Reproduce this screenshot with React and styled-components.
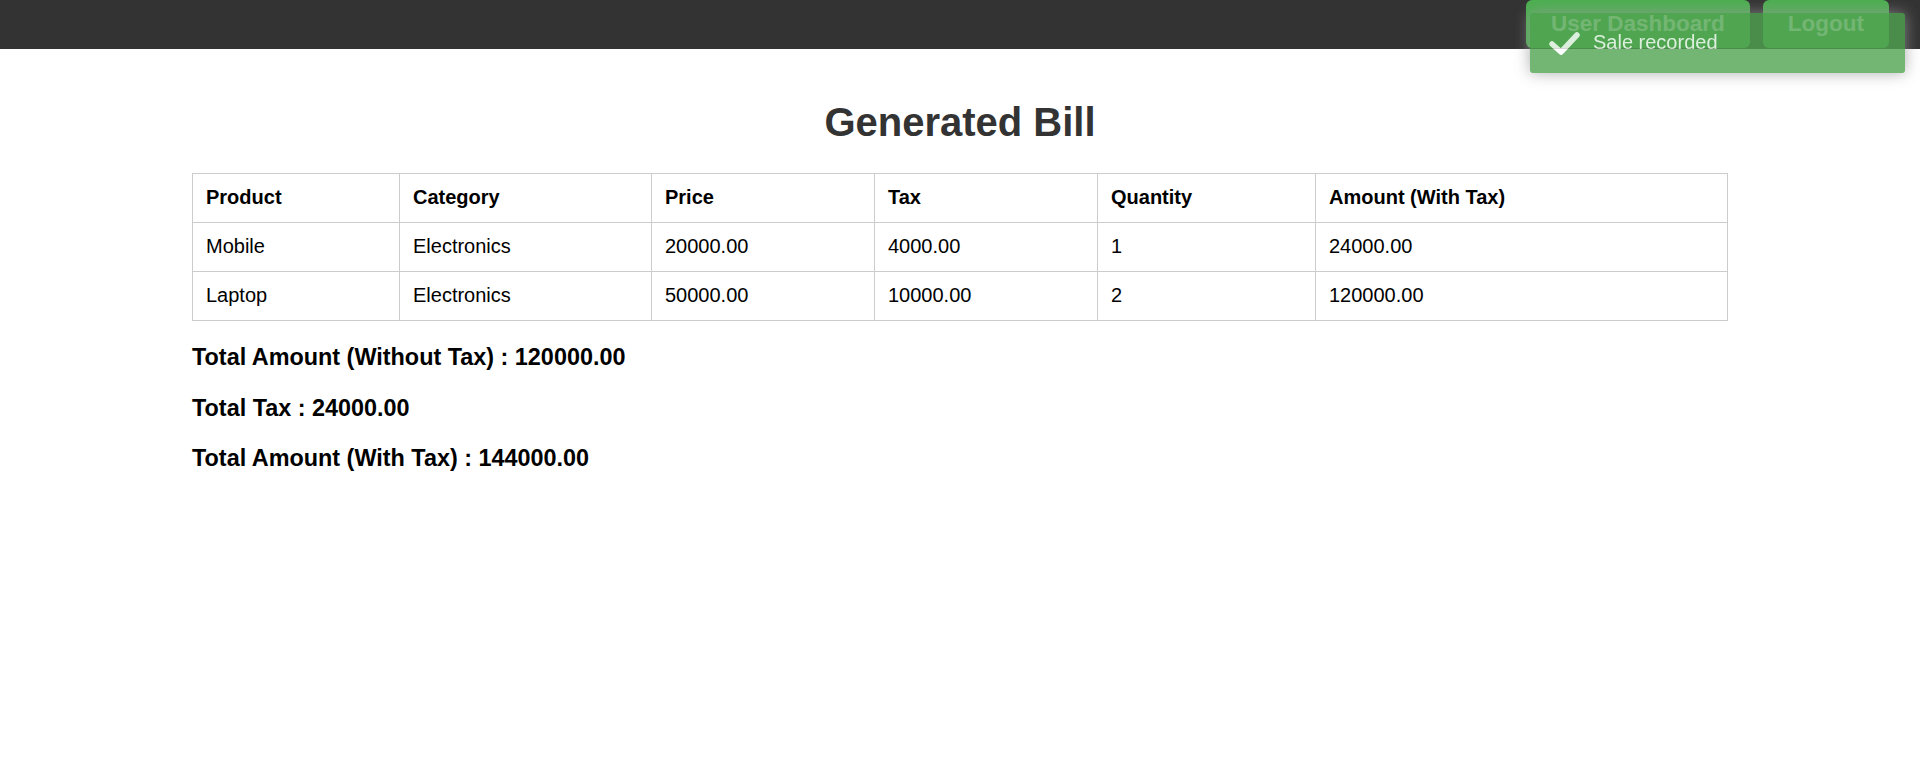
import React from "react";
import styled, { createGlobalStyle } from "styled-components";

const GlobalStyle = createGlobalStyle`
  html, body {
    margin: 0;
    padding: 0;
    background: #ffffff;
    font-family: "Liberation Sans", Arial, sans-serif;
  }
  * { box-sizing: border-box; }
`;

const Header = styled.header`
  height: 49px;
  background: #333333;
  display: flex;
  justify-content: flex-end;
  align-items: flex-start;
  gap: 13px;
  padding-right: 31px;
`;

const NavButton = styled.button`
  height: 48px;
  padding: 11px 25px;
  border: none;
  border-radius: 6px;
  background: #4caf50;
  color: #ffffff;
  font-family: "Liberation Sans", Arial, sans-serif;
  font-weight: bold;
  font-size: 22.5px;
  line-height: 26px;
  cursor: pointer;
`;

const Toast = styled.div`
  position: fixed;
  top: 13px;
  right: 15px;
  width: 375px;
  padding: 18px 15px 19px 63px;
  background: #51a351;
  color: #ffffff;
  border-radius: 3px;
  box-shadow: 0 0 15px #999999;
  opacity: 0.8;
  font-size: 20px;
  line-height: 23px;
  z-index: 1000;
`;

const ToastIcon = styled.svg`
  position: absolute;
  left: 18px;
  top: 18px;
  width: 32px;
  height: 24px;
`;

const Main = styled.main`
  width: 80%;
  margin: 0 auto;
  padding-top: 23px;
`;

const Title = styled.h1`
  margin: 27px 0 28px;
  text-align: center;
  color: #333333;
  font-size: 40px;
  line-height: 46px;
  font-weight: bold;
`;

const Table = styled.table`
  width: 100%;
  border-collapse: collapse;
  table-layout: fixed;
  font-size: 20px;
  line-height: 24px;
  color: #000000;
`;

const HeadCell = styled.th`
  width: ${(p) => (p.$w ? `${p.$w}px` : "auto")};
  border: 1px solid #cccccc;
  padding: 11px 13px 13px;
  text-align: left;
  font-weight: bold;
`;

const Cell = styled.td`
  border: 1px solid #cccccc;
  padding: 11px 13px 13px;
  text-align: left;
`;

const Total = styled.h3`
  margin: 23.4px 0;
  font-size: 23.4px;
  line-height: 27px;
  font-weight: bold;
  color: #000000;
`;

const columns = [
  { label: "Product", w: 207 },
  { label: "Category", w: 252 },
  { label: "Price", w: 223 },
  { label: "Tax", w: 223 },
  { label: "Quantity", w: 218 },
  { label: "Amount (With Tax)" },
];

const rows = [
  ["Mobile", "Electronics", "20000.00", "4000.00", "1", "24000.00"],
  ["Laptop", "Electronics", "50000.00", "10000.00", "2", "120000.00"],
];

export default function App() {
  return (
    <>
      <GlobalStyle />
      <Header>
        <NavButton>User Dashboard</NavButton>
        <NavButton>Logout</NavButton>
      </Header>
      <Toast>
        <ToastIcon viewBox="0 0 32 24" fill="none">
          <path
            d="M4 13 L13 21 L29 4"
            stroke="#ffffff"
            strokeWidth="5.5"
            strokeLinecap="round"
            strokeLinejoin="round"
          />
        </ToastIcon>
        Sale recorded
      </Toast>
      <Main>
        <Title>Generated Bill</Title>
        <Table>
          <thead>
            <tr>
              {columns.map((c) => (
                <HeadCell key={c.label} $w={c.w}>
                  {c.label}
                </HeadCell>
              ))}
            </tr>
          </thead>
          <tbody>
            {rows.map((r) => (
              <tr key={r[0]}>
                {r.map((v, i) => (
                  <Cell key={i}>{v}</Cell>
                ))}
              </tr>
            ))}
          </tbody>
        </Table>
        <Total>Total Amount (Without Tax) : 120000.00</Total>
        <Total>Total Tax : 24000.00</Total>
        <Total>Total Amount (With Tax) : 144000.00</Total>
      </Main>
    </>
  );
}
